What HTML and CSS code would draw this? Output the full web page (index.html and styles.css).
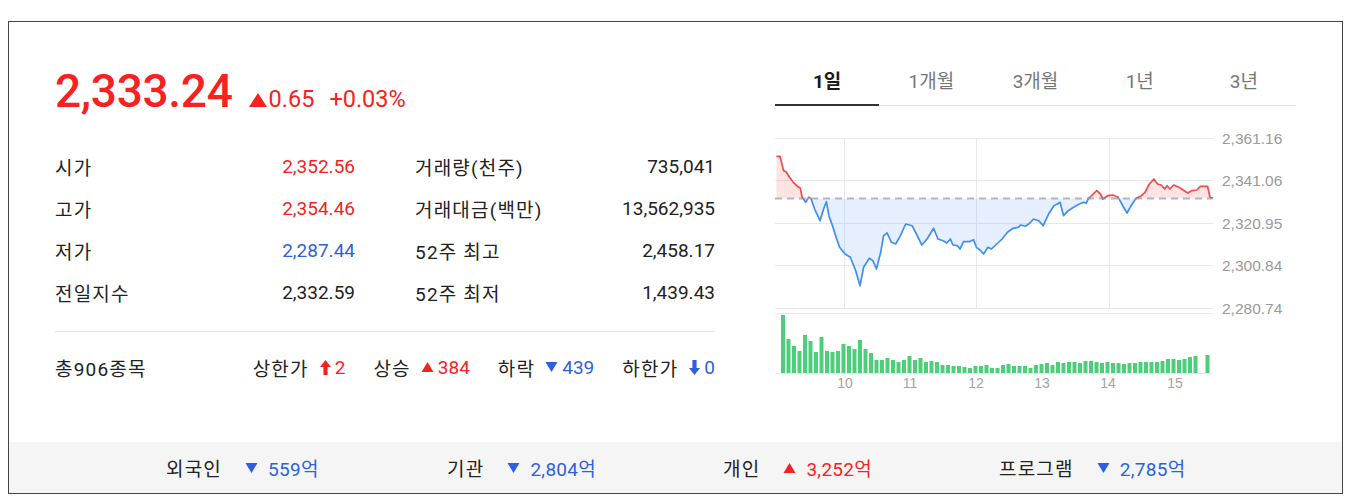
FILE: index.html
```html
<!DOCTYPE html>
<html lang="ko">
<head>
<meta charset="utf-8">
<link rel="stylesheet" href="styles.css">
</head>
<body>
<div class="card">
  <div class="main">
    <div class="left">
      <div class="price-row">
        <span class="price up">2,333.24</span>
        <span class="chg up"><svg class="tri-big" viewBox="0 0 18 14"><path d="M9 0 L18 14 H0 Z" fill="currentColor"/></svg>0.65</span>
        <span class="rate up">+0.03%</span>
      </div>
      <div class="table">
        <div class="col">
          <div class="row"><span class="lbl">시가</span><span class="val up">2,352.56</span></div>
          <div class="row"><span class="lbl">고가</span><span class="val up">2,354.46</span></div>
          <div class="row"><span class="lbl">저가</span><span class="val down">2,287.44</span></div>
          <div class="row"><span class="lbl">전일지수</span><span class="val">2,332.59</span></div>
        </div>
        <div class="col">
          <div class="row"><span class="lbl">거래량(천주)</span><span class="val">735,041</span></div>
          <div class="row"><span class="lbl">거래대금(백만)</span><span class="val">13,562,935</span></div>
          <div class="row"><span class="lbl">52주 최고</span><span class="val">2,458.17</span></div>
          <div class="row"><span class="lbl">52주 최저</span><span class="val">1,439.43</span></div>
        </div>
      </div>
      <div class="divider"></div>
      <div class="stats">
        <span class="lbl">총906종목</span>
        <div class="counts">
          <span class="cnt"><span class="lbl">상한가</span><svg class="arrow up" viewBox="0 0 11 15"><path d="M5.5 0 L11 7 H7.6 V15 H3.4 V7 H0 Z" fill="currentColor"/></svg><span class="up">2</span></span>
          <span class="cnt"><span class="lbl">상승</span><svg class="tri up" viewBox="0 0 12 10"><path d="M6 0 L12 10 H0 Z" fill="currentColor"/></svg><span class="up">384</span></span>
          <span class="cnt"><span class="lbl">하락</span><svg class="tri down" viewBox="0 0 12 10"><path d="M0 0 H12 L6 10 Z" fill="currentColor"/></svg><span class="down">439</span></span>
          <span class="cnt"><span class="lbl">하한가</span><svg class="arrow down" viewBox="0 0 11 15"><path d="M3.4 0 H7.6 V8 H11 L5.5 15 L0 8 H3.4 Z" fill="currentColor"/></svg><span class="down">0</span></span>
        </div>
      </div>
    </div>
    <div class="right">
      <div class="tabs">
        <span class="tab on">1일</span>
        <span class="tab">1개월</span>
        <span class="tab">3개월</span>
        <span class="tab">1년</span>
        <span class="tab">3년</span>
      </div>
      <svg class="chart" width="510" height="275" viewBox="0 0 510 275">
        <defs>
          <clipPath id="above"><rect x="0" y="0" width="440" height="74.4"/></clipPath>
          <clipPath id="below"><rect x="0" y="74.4" width="440" height="200"/></clipPath>
        </defs>
        <g class="grid">
          <line x1="0" y1="14.5" x2="438" y2="14.5"/>
          <line x1="0" y1="56.5" x2="438" y2="56.5"/>
          <line x1="0" y1="99.5" x2="438" y2="99.5"/>
          <line x1="0" y1="141.5" x2="438" y2="141.5"/>
          <line x1="0" y1="184.5" x2="438" y2="184.5"/>
          <line x1="0" y1="189.5" x2="438" y2="189.5"/>
          <line x1="69.5" y1="14" x2="69.5" y2="184"/>
          <line x1="201.5" y1="14" x2="201.5" y2="184"/>
          <line x1="334.5" y1="14" x2="334.5" y2="184"/>
          <line x1="0" y1="249.5" x2="438" y2="249.5"/>
        </g>
        <g class="ylabels">
          <text x="447" y="20">2,361.16</text>
          <text x="447" y="62">2,341.06</text>
          <text x="447" y="105">2,320.95</text>
          <text x="447" y="147">2,300.84</text>
          <text x="447" y="190">2,280.74</text>
        </g>
        <polygon class="fill-up" clip-path="url(#above)" points="1.4,32.3 5,32.3 8.6,46.7 11.1,47.7 14.6,53.3 18.2,58.3 21.8,61.7 25.4,64.3 27.1,73.3 30.7,78.3 33.6,73.3 36.1,75 39.6,85 45,96.7 48.6,85 51.4,77.7 53.9,91.7 57.5,101.7 61.1,113.3 64.6,123.3 70,130 75.4,133.3 80.7,146.7 85,161.7 88.6,143.3 94.3,134.3 97.9,136.7 101.4,145 105.7,128.3 108.6,111.7 112.1,109 116.4,118.3 120.7,120 125.4,111.7 130.7,100 137.1,101.7 141.4,110 146.8,121 152.1,115 158.6,104.3 162.9,115 168.2,116.7 171.8,119 175.4,115 177.9,121 182.5,121.7 185,125 188.6,117.7 194.3,117.7 198.6,115.7 201.4,123.3 205.7,126.7 208.6,130 212.9,123.3 216.4,125 221.8,120 227.1,115 232.5,108.3 237.9,104.3 243.2,103.3 245.7,101 250.4,102.3 255,99 258.6,95 263.6,96.7 268.2,101.7 273.6,90 278.9,81.7 282.5,80 285,78.3 288.6,91.7 293.2,86.7 298.6,83.3 303.9,80.3 308.6,78.3 311.1,79.3 313.6,74.3 318.2,70 321.8,66.7 325.4,70 327.9,75 332.5,71.7 337.9,71 343.2,73.3 348.6,83.3 352.1,89 355.7,82.3 361.1,74.3 366.4,71.7 370,68.3 374.3,60 378.9,55 382.5,60 386.1,61 389.6,65 392.1,61.7 395,65 398.6,61 403.9,63.3 409.3,66.7 412.9,69 416.4,66.7 421.8,66 425.4,62.3 432.5,62.3 435,73.3 437.9,74.3 437.9,74.4 1.4,74.4"/>
        <polygon class="fill-down" clip-path="url(#below)" points="1.4,32.3 5,32.3 8.6,46.7 11.1,47.7 14.6,53.3 18.2,58.3 21.8,61.7 25.4,64.3 27.1,73.3 30.7,78.3 33.6,73.3 36.1,75 39.6,85 45,96.7 48.6,85 51.4,77.7 53.9,91.7 57.5,101.7 61.1,113.3 64.6,123.3 70,130 75.4,133.3 80.7,146.7 85,161.7 88.6,143.3 94.3,134.3 97.9,136.7 101.4,145 105.7,128.3 108.6,111.7 112.1,109 116.4,118.3 120.7,120 125.4,111.7 130.7,100 137.1,101.7 141.4,110 146.8,121 152.1,115 158.6,104.3 162.9,115 168.2,116.7 171.8,119 175.4,115 177.9,121 182.5,121.7 185,125 188.6,117.7 194.3,117.7 198.6,115.7 201.4,123.3 205.7,126.7 208.6,130 212.9,123.3 216.4,125 221.8,120 227.1,115 232.5,108.3 237.9,104.3 243.2,103.3 245.7,101 250.4,102.3 255,99 258.6,95 263.6,96.7 268.2,101.7 273.6,90 278.9,81.7 282.5,80 285,78.3 288.6,91.7 293.2,86.7 298.6,83.3 303.9,80.3 308.6,78.3 311.1,79.3 313.6,74.3 318.2,70 321.8,66.7 325.4,70 327.9,75 332.5,71.7 337.9,71 343.2,73.3 348.6,83.3 352.1,89 355.7,82.3 361.1,74.3 366.4,71.7 370,68.3 374.3,60 378.9,55 382.5,60 386.1,61 389.6,65 392.1,61.7 395,65 398.6,61 403.9,63.3 409.3,66.7 412.9,69 416.4,66.7 421.8,66 425.4,62.3 432.5,62.3 435,73.3 437.9,74.3 437.9,74.4 1.4,74.4"/>
        <line class="base" x1="0" y1="74.4" x2="438" y2="74.4"/>
        <polyline class="line-up" clip-path="url(#above)" points="1.4,32.3 5,32.3 8.6,46.7 11.1,47.7 14.6,53.3 18.2,58.3 21.8,61.7 25.4,64.3 27.1,73.3 30.7,78.3 33.6,73.3 36.1,75 39.6,85 45,96.7 48.6,85 51.4,77.7 53.9,91.7 57.5,101.7 61.1,113.3 64.6,123.3 70,130 75.4,133.3 80.7,146.7 85,161.7 88.6,143.3 94.3,134.3 97.9,136.7 101.4,145 105.7,128.3 108.6,111.7 112.1,109 116.4,118.3 120.7,120 125.4,111.7 130.7,100 137.1,101.7 141.4,110 146.8,121 152.1,115 158.6,104.3 162.9,115 168.2,116.7 171.8,119 175.4,115 177.9,121 182.5,121.7 185,125 188.6,117.7 194.3,117.7 198.6,115.7 201.4,123.3 205.7,126.7 208.6,130 212.9,123.3 216.4,125 221.8,120 227.1,115 232.5,108.3 237.9,104.3 243.2,103.3 245.7,101 250.4,102.3 255,99 258.6,95 263.6,96.7 268.2,101.7 273.6,90 278.9,81.7 282.5,80 285,78.3 288.6,91.7 293.2,86.7 298.6,83.3 303.9,80.3 308.6,78.3 311.1,79.3 313.6,74.3 318.2,70 321.8,66.7 325.4,70 327.9,75 332.5,71.7 337.9,71 343.2,73.3 348.6,83.3 352.1,89 355.7,82.3 361.1,74.3 366.4,71.7 370,68.3 374.3,60 378.9,55 382.5,60 386.1,61 389.6,65 392.1,61.7 395,65 398.6,61 403.9,63.3 409.3,66.7 412.9,69 416.4,66.7 421.8,66 425.4,62.3 432.5,62.3 435,73.3 437.9,74.3"/>
        <polyline class="line-down" clip-path="url(#below)" points="1.4,32.3 5,32.3 8.6,46.7 11.1,47.7 14.6,53.3 18.2,58.3 21.8,61.7 25.4,64.3 27.1,73.3 30.7,78.3 33.6,73.3 36.1,75 39.6,85 45,96.7 48.6,85 51.4,77.7 53.9,91.7 57.5,101.7 61.1,113.3 64.6,123.3 70,130 75.4,133.3 80.7,146.7 85,161.7 88.6,143.3 94.3,134.3 97.9,136.7 101.4,145 105.7,128.3 108.6,111.7 112.1,109 116.4,118.3 120.7,120 125.4,111.7 130.7,100 137.1,101.7 141.4,110 146.8,121 152.1,115 158.6,104.3 162.9,115 168.2,116.7 171.8,119 175.4,115 177.9,121 182.5,121.7 185,125 188.6,117.7 194.3,117.7 198.6,115.7 201.4,123.3 205.7,126.7 208.6,130 212.9,123.3 216.4,125 221.8,120 227.1,115 232.5,108.3 237.9,104.3 243.2,103.3 245.7,101 250.4,102.3 255,99 258.6,95 263.6,96.7 268.2,101.7 273.6,90 278.9,81.7 282.5,80 285,78.3 288.6,91.7 293.2,86.7 298.6,83.3 303.9,80.3 308.6,78.3 311.1,79.3 313.6,74.3 318.2,70 321.8,66.7 325.4,70 327.9,75 332.5,71.7 337.9,71 343.2,73.3 348.6,83.3 352.1,89 355.7,82.3 361.1,74.3 366.4,71.7 370,68.3 374.3,60 378.9,55 382.5,60 386.1,61 389.6,65 392.1,61.7 395,65 398.6,61 403.9,63.3 409.3,66.7 412.9,69 416.4,66.7 421.8,66 425.4,62.3 432.5,62.3 435,73.3 437.9,74.3"/>
        <g class="bars" transform="translate(0,249) scale(1,-1)">
          <rect x="6" y="0" width="4" height="58"/>
          <rect x="11.5" y="0" width="4" height="34"/>
          <rect x="17" y="0" width="4" height="27"/>
          <rect x="22.5" y="0" width="4" height="22"/>
          <rect x="28" y="0" width="4" height="38"/>
          <rect x="33.5" y="0" width="4" height="32"/>
          <rect x="39" y="0" width="4" height="21"/>
          <rect x="44.5" y="0" width="4" height="36"/>
          <rect x="50" y="0" width="4" height="22"/>
          <rect x="55.5" y="0" width="4" height="21"/>
          <rect x="61" y="0" width="4" height="22"/>
          <rect x="66.5" y="0" width="4" height="29"/>
          <rect x="72" y="0" width="4" height="27"/>
          <rect x="77.5" y="0" width="4" height="24"/>
          <rect x="83" y="0" width="4" height="33"/>
          <rect x="88.5" y="0" width="4" height="24"/>
          <rect x="94" y="0" width="4" height="20"/>
          <rect x="99.5" y="0" width="4" height="13"/>
          <rect x="105" y="0" width="4" height="13"/>
          <rect x="110.5" y="0" width="4" height="15"/>
          <rect x="116" y="0" width="4" height="13"/>
          <rect x="121.5" y="0" width="4" height="11"/>
          <rect x="127" y="0" width="4" height="13"/>
          <rect x="132.5" y="0" width="4" height="17"/>
          <rect x="138" y="0" width="4" height="13"/>
          <rect x="143.5" y="0" width="4" height="15"/>
          <rect x="149" y="0" width="4" height="11"/>
          <rect x="154.5" y="0" width="4" height="12"/>
          <rect x="160" y="0" width="4" height="11"/>
          <rect x="165.5" y="0" width="4" height="8"/>
          <rect x="171" y="0" width="4" height="8"/>
          <rect x="176.5" y="0" width="4" height="7"/>
          <rect x="182" y="0" width="4" height="7"/>
          <rect x="187.5" y="0" width="4" height="6"/>
          <rect x="193" y="0" width="4" height="5"/>
          <rect x="198.5" y="0" width="4" height="7"/>
          <rect x="204" y="0" width="4" height="7"/>
          <rect x="209.5" y="0" width="4" height="8"/>
          <rect x="215" y="0" width="4" height="5"/>
          <rect x="220.5" y="0" width="4" height="5"/>
          <rect x="226" y="0" width="4" height="8"/>
          <rect x="231.5" y="0" width="4" height="9"/>
          <rect x="237" y="0" width="4" height="7"/>
          <rect x="242.5" y="0" width="4" height="7"/>
          <rect x="248" y="0" width="4" height="7"/>
          <rect x="253.5" y="0" width="4" height="5"/>
          <rect x="259" y="0" width="4" height="8"/>
          <rect x="264.5" y="0" width="4" height="9"/>
          <rect x="270" y="0" width="4" height="10"/>
          <rect x="275.5" y="0" width="4" height="8"/>
          <rect x="281" y="0" width="4" height="11"/>
          <rect x="286.5" y="0" width="4" height="10"/>
          <rect x="292" y="0" width="4" height="11"/>
          <rect x="297.5" y="0" width="4" height="11"/>
          <rect x="303" y="0" width="4" height="10"/>
          <rect x="308.5" y="0" width="4" height="12"/>
          <rect x="314" y="0" width="4" height="12"/>
          <rect x="319.5" y="0" width="4" height="11"/>
          <rect x="325" y="0" width="4" height="10"/>
          <rect x="330.5" y="0" width="4" height="11"/>
          <rect x="336" y="0" width="4" height="10"/>
          <rect x="341.5" y="0" width="4" height="10"/>
          <rect x="347" y="0" width="4" height="9"/>
          <rect x="352.5" y="0" width="4" height="10"/>
          <rect x="358" y="0" width="4" height="10"/>
          <rect x="363.5" y="0" width="4" height="11"/>
          <rect x="369" y="0" width="4" height="11"/>
          <rect x="374.5" y="0" width="4" height="11"/>
          <rect x="380" y="0" width="4" height="11"/>
          <rect x="385.5" y="0" width="4" height="12"/>
          <rect x="391" y="0" width="4" height="14"/>
          <rect x="396.5" y="0" width="4" height="14"/>
          <rect x="402" y="0" width="4" height="13"/>
          <rect x="407.5" y="0" width="4" height="14"/>
          <rect x="413" y="0" width="4" height="16"/>
          <rect x="418.5" y="0" width="4" height="17"/>
          <rect x="430.5" y="0" width="4" height="18"/>
        </g>
        <g class="xlabels">
          <text x="70" y="264">10</text>
          <text x="135" y="264">11</text>
          <text x="201" y="264">12</text>
          <text x="267" y="264">13</text>
          <text x="333" y="264">14</text>
          <text x="400" y="264">15</text>
        </g>
      </svg>
    </div>
  </div>
  <div class="footer">
    <span class="fitem"><span class="lbl">외국인</span><svg class="tri down" viewBox="0 0 12 10"><path d="M0 0 H12 L6 10 Z" fill="currentColor"/></svg><span class="fval down">559<span class="unit">억</span></span></span>
    <span class="fitem"><span class="lbl">기관</span><svg class="tri down" viewBox="0 0 12 10"><path d="M0 0 H12 L6 10 Z" fill="currentColor"/></svg><span class="fval down">2,804<span class="unit">억</span></span></span>
    <span class="fitem"><span class="lbl">개인</span><svg class="tri up" viewBox="0 0 12 10"><path d="M6 0 L12 10 H0 Z" fill="currentColor"/></svg><span class="fval up">3,252<span class="unit">억</span></span></span>
    <span class="fitem"><span class="lbl">프로그램</span><svg class="tri down" viewBox="0 0 12 10"><path d="M0 0 H12 L6 10 Z" fill="currentColor"/></svg><span class="fval down">2,785<span class="unit">억</span></span></span>
  </div>
</div>
</body>
</html>
```

FILE: styles.css
```css
body {
  margin: 8px;
  font-family: Roboto, "Noto Sans CJK KR", sans-serif;
  color: #222;
  background: #fff;
}

.card {
  margin-top: 13px;
  width: 1333px;
  height: 471px;
  border: 1px solid #444;
  display: flex;
  flex-direction: column;
}

.main {
  height: 420px;
  display: flex;
  gap: 60px;
  padding: 0 46px;
}

.up { color: #f5221f; }
.down { color: #2f5fdf; }

.left {
  width: 660px;
  padding-top: 42px;
}

.price-row {
  display: flex;
  align-items: baseline;
  height: 54px;
}

.price {
  font-size: 46px;
  font-weight: 500;
  line-height: 54px;
  letter-spacing: -0.3px;
}

.chg {
  margin-left: 16px;
  font-size: 23.5px;
  display: inline-flex;
  align-items: baseline;
}

.tri-big {
  width: 18px;
  height: 14px;
  margin-right: 2px;
}

.rate {
  margin-left: 15px;
  font-size: 23.5px;
}

.table {
  margin-top: 27px;
  display: grid;
  grid-template-columns: 300px 300px;
  column-gap: 60px;
}

.row {
  height: 42px;
  display: flex;
  align-items: center;
  justify-content: space-between;
  font-size: 19px;
}

.lbl {
  color: #222;
  letter-spacing: 1.2px;
}

.divider {
  margin-top: 18px;
  height: 1px;
  background: #e4e5ea;
}

.stats {
  margin-top: 14px;
  height: 42px;
  display: flex;
  align-items: center;
  justify-content: space-between;
  font-size: 19px;
}

.counts {
  display: flex;
  gap: 28px;
}

.cnt {
  display: inline-flex;
  align-items: center;
}

.arrow {
  width: 11px;
  height: 15px;
  margin: 0 4px 0 11px;
}

.tri {
  width: 13px;
  height: 10px;
  margin: 0 4px 0 10px;
}

.right {
  width: 521px;
  padding-top: 36px;
}

.tabs {
  display: flex;
  border-bottom: 1px solid #e5e5e5;
}

.tab {
  flex: 1;
  height: 47px;
  line-height: 47px;
  text-align: center;
  font-size: 19px;
  color: #777;
}

.tab.on {
  height: 46px;
  border-bottom: 2px solid #333;
  margin-bottom: -1px;
  color: #1a1a1a;
  font-weight: 700;
}

.chart {
  display: block;
  margin-top: 18px;
}

.grid line {
  stroke: #e7e9ee;
  stroke-width: 1;
}

.ylabels text {
  font-family: "Liberation Sans", Arial, sans-serif;
  font-size: 15.5px;
  fill: #9a9a9a;
}

.xlabels text {
  font-family: "Liberation Sans", Arial, sans-serif;
  font-size: 14px;
  fill: #a3a3a3;
  text-anchor: middle;
}

.fill-up { fill: rgba(250, 80, 80, 0.16); }
.fill-down { fill: rgba(70, 145, 245, 0.14); }

.base {
  stroke: #b3b6bf;
  stroke-width: 2;
  stroke-dasharray: 7 5;
}

.line-up, .line-down {
  fill: none;
  stroke-width: 1.7;
  stroke-linejoin: round;
}
.line-up { stroke: #f44a4a; }
.line-down { stroke: #3f8ef3; }

.bars rect { fill: #4ccf78; }

.footer {
  height: 51px;
  background: #f5f5f5;
  display: grid;
  grid-template-columns: 281px 276px 276px auto;
  align-items: center;
  padding-left: 157px;
  font-size: 19px;
}

.fitem {
  display: inline-flex;
  align-items: center;
}

.fval {
  letter-spacing: 0.3px;
}

.unit {
  letter-spacing: 1px;
}

.fitem .tri {
  margin: 0 10px 0 23px;
}
```
